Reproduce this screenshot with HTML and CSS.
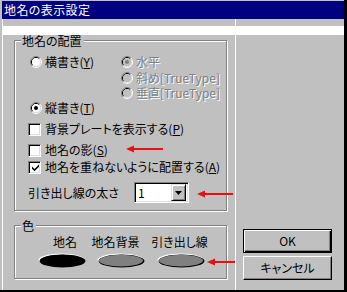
FILE: index.html
```html
<!DOCTYPE html>
<html lang="ja">
<head>
<meta charset="utf-8">
<title>地名の表示設定</title>
<link rel="stylesheet" href="styles.css">
</head>
<body>
<div class="window">
  <div class="titlebar">地名の表示設定</div>
  <div class="lower">
    <div class="band"></div>
    <div class="divider"></div>
    <div class="main">
      <div class="group group-place">
        <div class="group-title">地名の配置</div>
        <div class="orient">
          <label class="opt o-yoko"><svg class="radio" viewBox="0 0 12 12" width="12" height="12"><path d="M2.11 9.89A5.5 5.5 0 0 1 9.89 2.11" fill="none" stroke="#808080"/><path d="M9.89 2.11A5.5 5.5 0 0 1 2.11 9.89" fill="none" stroke="#fff"/><path d="M2.82 9.18A4.5 4.5 0 0 1 9.18 2.82" fill="none" stroke="#000"/><path d="M9.18 2.82A4.5 4.5 0 0 1 2.82 9.18" fill="none" stroke="#dfdfdf"/><circle cx="6" cy="6" r="4" fill="#fff"/></svg><span>横書き(<u>Y</u>)</span></label>
          <label class="opt o-sui disabled"><svg class="radio" viewBox="0 0 12 12" width="12" height="12"><path d="M2.11 9.89A5.5 5.5 0 0 1 9.89 2.11" fill="none" stroke="#808080"/><path d="M9.89 2.11A5.5 5.5 0 0 1 2.11 9.89" fill="none" stroke="#fff"/><path d="M2.82 9.18A4.5 4.5 0 0 1 9.18 2.82" fill="none" stroke="#000"/><path d="M9.18 2.82A4.5 4.5 0 0 1 2.82 9.18" fill="none" stroke="#dfdfdf"/><circle cx="6" cy="6" r="4" fill="#c0c0c0"/><circle cx="6" cy="6" r="2" fill="#808080"/></svg><span>水平</span></label>
          <label class="opt o-sha disabled"><svg class="radio" viewBox="0 0 12 12" width="12" height="12"><path d="M2.11 9.89A5.5 5.5 0 0 1 9.89 2.11" fill="none" stroke="#808080"/><path d="M9.89 2.11A5.5 5.5 0 0 1 2.11 9.89" fill="none" stroke="#fff"/><path d="M2.82 9.18A4.5 4.5 0 0 1 9.18 2.82" fill="none" stroke="#000"/><path d="M9.18 2.82A4.5 4.5 0 0 1 2.82 9.18" fill="none" stroke="#dfdfdf"/><circle cx="6" cy="6" r="4" fill="#c0c0c0"/></svg><span>斜め[TrueType]</span></label>
          <label class="opt o-sui2 disabled"><svg class="radio" viewBox="0 0 12 12" width="12" height="12"><path d="M2.11 9.89A5.5 5.5 0 0 1 9.89 2.11" fill="none" stroke="#808080"/><path d="M9.89 2.11A5.5 5.5 0 0 1 2.11 9.89" fill="none" stroke="#fff"/><path d="M2.82 9.18A4.5 4.5 0 0 1 9.18 2.82" fill="none" stroke="#000"/><path d="M9.18 2.82A4.5 4.5 0 0 1 2.82 9.18" fill="none" stroke="#dfdfdf"/><circle cx="6" cy="6" r="4" fill="#c0c0c0"/></svg><span>垂直[TrueType]</span></label>
          <label class="opt o-tate"><svg class="radio" viewBox="0 0 12 12" width="12" height="12"><path d="M2.11 9.89A5.5 5.5 0 0 1 9.89 2.11" fill="none" stroke="#808080"/><path d="M9.89 2.11A5.5 5.5 0 0 1 2.11 9.89" fill="none" stroke="#fff"/><path d="M2.82 9.18A4.5 4.5 0 0 1 9.18 2.82" fill="none" stroke="#000"/><path d="M9.18 2.82A4.5 4.5 0 0 1 2.82 9.18" fill="none" stroke="#dfdfdf"/><circle cx="6" cy="6" r="4" fill="#fff"/><circle cx="6" cy="6" r="2" fill="#000"/></svg><span>縦書き(<u>T</u>)</span></label>
        </div>
        <label class="chk c-plate"><span class="box"></span><span>背景プレートを表示する(<u>P</u>)</span></label>
        <label class="chk c-shadow"><span class="box"></span><span>地名の影(<u>S</u>)</span></label>
        <label class="chk c-overlap"><span class="box"><svg viewBox="0 0 9 9" width="9" height="9"><path d="M1 3.5L3.5 6L8 1.5V3.7L3.5 8.2L1 5.7Z" fill="#000"/></svg></span><span>地名を重ねないように配置する(<u>A</u>)</span></label>
        <div class="thick">
          <span>引き出し線の太さ</span>
          <div class="combo"><span class="combo-value">1</span><span class="combo-btn"><svg viewBox="0 0 7 4" width="7" height="4"><path d="M0 0H7L3.5 4Z" fill="#000"/></svg></span></div>
        </div>
      </div>
      <div class="group group-color">
        <div class="group-title">色</div>
        <div class="color-labels"><span>地名</span><span>地名背景</span><span>引き出し線</span></div>
        <div class="color-swatches">
          <svg class="swatch" viewBox="0 0 48 15" width="48" height="15"><ellipse cx="23.5" cy="7" rx="23" ry="6.5" fill="#fff"/><ellipse cx="24.5" cy="8" rx="23" ry="6.5" fill="#000"/><ellipse cx="24" cy="7.6" rx="22" ry="5.8" fill="#000"/></svg>
          <svg class="swatch" viewBox="0 0 48 15" width="48" height="15"><ellipse cx="23.5" cy="7" rx="23" ry="6.5" fill="#fff"/><ellipse cx="24.5" cy="8" rx="23" ry="6.5" fill="#000"/><ellipse cx="24" cy="7.6" rx="22" ry="5.8" fill="#808080"/></svg>
          <svg class="swatch" viewBox="0 0 48 15" width="48" height="15"><ellipse cx="23.5" cy="7" rx="23" ry="6.5" fill="#fff"/><ellipse cx="24.5" cy="8" rx="23" ry="6.5" fill="#000"/><ellipse cx="24" cy="7.6" rx="22" ry="5.8" fill="#808080"/></svg>
        </div>
      </div>
    </div>
    <div class="side">
      <button class="btn btn-default">OK</button>
      <button class="btn">キャンセル</button>
    </div>
  </div>
  <svg class="arrow arrow-1" viewBox="0 0 37 8" width="37" height="8"><path d="M0 4L8 0.5V7.5Z" fill="#e81010"/><rect x="6" y="3" width="31" height="2" fill="#e81010"/></svg>
  <svg class="arrow arrow-2" viewBox="0 0 36 8" width="36" height="8"><path d="M0 4L8 0.5V7.5Z" fill="#e81010"/><rect x="6" y="3" width="30" height="2" fill="#e81010"/></svg>
  <svg class="arrow arrow-3" viewBox="0 0 28 8" width="28" height="8"><path d="M0 4L8 0.5V7.5Z" fill="#e81010"/><rect x="6" y="3" width="22" height="2" fill="#e81010"/></svg>
</div>
</body>
</html>
```

FILE: styles.css
```css
* { box-sizing: border-box; }

html, body {
  margin: 0;
  background: #c0c0c0;
}

body {
  font-family: "Noto Sans CJK JP", "Noto Sans CJK SC", sans-serif;
  font-size: 12px;
  font-feature-settings: "palt";
  color: #000;
}

.window {
  position: relative;
  width: 347px;
  height: 292px;
  background: #c0c0c0;
  border-right: 3px solid #000;
  border-bottom: 2px solid #000;
  padding-top: 1px;
  overflow: hidden;
}

.titlebar {
  margin-left: 2px;
  height: 18px;
  background: #000080;
  color: #fff;
  line-height: 18px;
  padding-left: 2px;
  letter-spacing: 0.4px;
  white-space: nowrap;
}

.lower {
  margin-left: 2px;
  height: 271px;
  border-left: 1px solid #fff;
  display: grid;
  grid-template-columns: 232px 1px 1fr;
  grid-template-rows: 7px 9px 1fr;
}

.band {
  grid-column: 1 / -1;
  grid-row: 2;
  background: #fff;
}

.divider {
  grid-column: 2;
  grid-row: 1 / -1;
  background: #fff;
}

.main {
  grid-column: 1;
  grid-row: 3;
  padding: 5px 0 0 11px;
}

.group {
  width: 213px;
  border: 1px solid #808080;
  box-shadow: 1px 1px 0 #fff, inset 1px 1px 0 #fff;
}

.group-title {
  width: fit-content;
  height: 12px;
  margin: -6px 0 0 6px;
  padding: 0 2px 0 1px;
  line-height: 12px;
  background: #c0c0c0;
  white-space: nowrap;
}

.group-place { padding-bottom: 7px; }

.orient {
  margin-top: 7px;
  padding-left: 15px;
  display: grid;
  grid-template-columns: 91px auto;
  grid-template-rows: 16px 15px 15px 16px;
}

.opt {
  display: flex;
  align-items: center;
  gap: 3px;
  line-height: 14px;
  white-space: nowrap;
}

.radio { flex: none; display: block; }

.o-yoko { grid-column: 1; grid-row: 1; }
.o-sui { grid-column: 2; grid-row: 1; }
.o-sha { grid-column: 2; grid-row: 2; }
.o-sui2 { grid-column: 2; grid-row: 3; }
.o-tate { grid-column: 1; grid-row: 4; }

.disabled span {
  color: #808080;
  text-shadow: 1px 1px 0 #fff;
}

u { text-decoration-thickness: 1px; text-underline-offset: 1px; }

.chk {
  display: flex;
  align-items: center;
  gap: 4px;
  height: 16px;
  line-height: 14px;
  padding-left: 13px;
  white-space: nowrap;
}

.c-plate { margin-top: 5px; }
.c-shadow { margin-top: 5px; }
.c-overlap { margin-top: 1px; }

.box {
  flex: none;
  width: 13px;
  height: 13px;
  background: #fff;
  border: 1px solid;
  border-color: #808080 #fff #fff #808080;
  box-shadow: inset 1px 1px 0 #000, inset -1px -1px 0 #dfdfdf;
  display: flex;
  align-items: center;
  justify-content: center;
}

.box svg { display: block; margin: 1px 0 0 1px; }

.thick {
  margin-top: 7px;
  height: 21px;
  line-height: 14px;
  padding-left: 13px;
  display: grid;
  grid-template-columns: 106px 55px;
  align-items: center;
  white-space: nowrap;
}

.combo {
  height: 21px;
  background: #fff;
  border: 1px solid;
  border-color: #808080 #fff #fff #808080;
  box-shadow: inset 1px 1px 0 #000, inset -1px -1px 0 #dfdfdf;
  display: flex;
  align-items: center;
  padding: 2px;
}

.combo-value {
  flex: 1;
  padding-left: 1px;
  line-height: 15px;
}

.combo-btn {
  width: 15px;
  height: 17px;
  background: #c0c0c0;
  border: 1px solid;
  border-color: #dfdfdf #000 #000 #dfdfdf;
  box-shadow: inset 1px 1px 0 #fff, inset -1px -1px 0 #808080;
  display: flex;
  align-items: center;
  justify-content: center;
}

.combo-btn svg { display: block; }

.group-color {
  margin-top: 14px;
  padding-bottom: 10px;
}

.color-labels {
  margin-top: 4px;
  height: 12px;
  line-height: 12px;
  padding-left: 25px;
  display: grid;
  grid-template-columns: 50px 51px 77px;
  text-align: center;
  white-space: nowrap;
}

.color-swatches {
  margin-top: 5px;
  height: 15px;
  padding-left: 23px;
  display: flex;
  gap: 11px;
}

.swatch { display: block; }
.swatch + .swatch + .swatch { margin-left: 1px; }

.side {
  grid-column: 3;
  grid-row: 3;
  padding: 194px 0 0 7px;
  display: flex;
  flex-direction: column;
  gap: 3px;
}

.btn {
  width: 89px;
  height: 24px;
  margin: 0;
  padding: 0;
  font: inherit;
  color: #000;
  background: #c0c0c0;
  border: 1px solid;
  border-color: #fff #000 #000 #fff;
  box-shadow: inset -1px -1px 0 #808080;
  text-align: center;
  line-height: 20px;
}

.btn-default {
  border-color: #000;
  box-shadow: inset 1px 1px 0 #fff, inset -1px -1px 0 #000, inset -2px -2px 0 #808080;
}

.arrow {
  position: absolute;
  display: block;
}

.arrow-1 { left: 126px; top: 145px; }
.arrow-2 { left: 197px; top: 190px; }
.arrow-3 { left: 207px; top: 258px; }
```
